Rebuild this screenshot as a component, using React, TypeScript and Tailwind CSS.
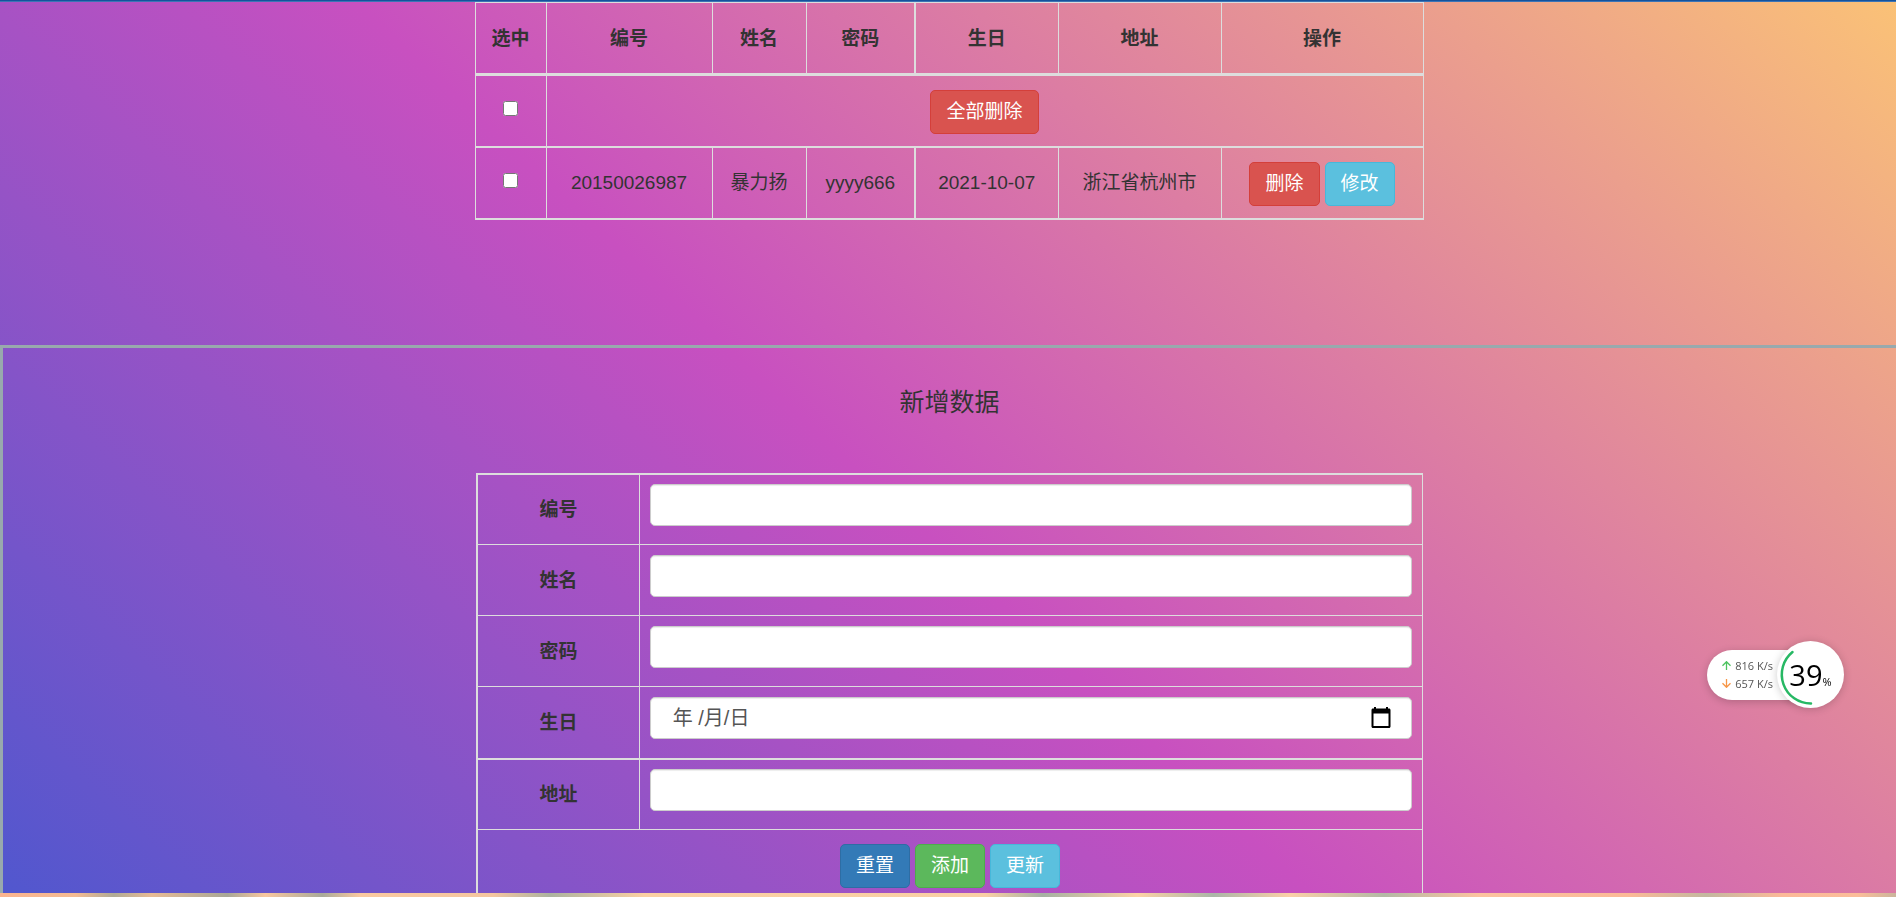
import { useState } from 'react';
import type { ReactNode } from 'react';
import clsx from 'clsx';

type Tone = 'danger' | 'info' | 'primary' | 'success';

const tones: Record<Tone, string> = {
  danger: 'bg-[#d9534f] border-[#d43f3a]',
  info: 'bg-[#5bc0de] border-[#46b8da]',
  primary: 'bg-[#337ab7] border-[#2e6da4]',
  success: 'bg-[#5cb85c] border-[#4cae4c]',
};

function Button({ tone, children }: { tone: Tone; children: ReactNode }) {
  return (
    <button
      type="button"
      className={clsx('h-11 rounded-[5px] border px-[15px] text-[19px] leading-6 text-white', tones[tone])}
    >
      {children}
    </button>
  );
}

const columns = [
  { label: '选中', width: 'w-[71px]' },
  { label: '编号', width: 'w-[166px]' },
  { label: '姓名', width: 'w-[94px]' },
  { label: '密码', width: 'w-[109px]' },
  { label: '生日', width: 'w-[143px]' },
  { label: '地址', width: 'w-[163px]' },
  { label: '操作', width: 'w-[202px]' },
];

const users = [
  { id: '20150026987', name: '暴力扬', password: 'yyyy666', birthday: '2021-10-07', address: '浙江省杭州市' },
];

const fields = [
  { id: 'no', label: '编号' },
  { id: 'name', label: '姓名' },
  { id: 'password', label: '密码' },
  { id: 'birthday', label: '生日' },
  { id: 'address', label: '地址' },
];

const cell = 'border border-[#ddd] p-0';
const control =
  'mb-2 flex h-[42px] w-full rounded-[5px] border border-[#ccc] bg-white text-[#555] shadow-[inset_0_1px_1px_rgba(0,0,0,0.075)]';

function UserTable() {
  return (
    <table className="mx-auto w-1/2 table-fixed border-collapse border border-[#ddd] text-center">
      <thead>
        <tr className="h-[72px]">
          {columns.map((c, i) => (
            <th key={c.label} className={clsx(cell, c.width, 'border-b-3 font-bold', i === 4 && 'border-l-2')}>
              {c.label}
            </th>
          ))}
        </tr>
      </thead>
      <tbody>
        <tr className="h-[72px]">
          <td className={clsx(cell, 'border-b-2')}>
            <input type="checkbox" aria-label="全选" className="mx-auto mb-1 block h-[15px] w-[15px]" />
          </td>
          <td colSpan={6} className={clsx(cell, 'border-b-2 pt-0.5')}>
            <Button tone="danger">全部删除</Button>
          </td>
        </tr>
        {users.map((u) => (
          <tr key={u.id} className="h-[72px]">
            <td className={clsx(cell, 'border-b-2')}>
              <input type="checkbox" aria-label={u.id} className="mx-auto mb-1 block h-[15px] w-[15px]" />
            </td>
            <td className={clsx(cell, 'border-b-2')}>{u.id}</td>
            <td className={clsx(cell, 'border-b-2')}>{u.name}</td>
            <td className={clsx(cell, 'border-b-2')}>{u.password}</td>
            <td className={clsx(cell, 'border-b-2 border-l-2')}>{u.birthday}</td>
            <td className={clsx(cell, 'border-b-2')}>{u.address}</td>
            <td className={clsx(cell, 'border-b-2 pt-0.5')}>
              <div className="flex justify-center gap-[5px]">
                <Button tone="danger">删除</Button>
                <Button tone="info">修改</Button>
              </div>
            </td>
          </tr>
        ))}
      </tbody>
    </table>
  );
}

function DateField({ id }: { id: string }) {
  const [value, setValue] = useState('');
  return (
    <div className={clsx(control, 'items-center pr-5 pl-[22px] text-[20px]')}>
      <input
        id={id}
        type="text"
        value={value}
        onChange={(e) => setValue(e.target.value)}
        placeholder="年 /月/日"
        className="min-w-0 flex-1 outline-none placeholder:text-[#555]"
      />
      <button type="button" aria-label="选择日期">
        <svg width="20" height="22" viewBox="0 0 20 22">
          <path
            fill="#000"
            fillRule="evenodd"
            d="M3 0h2v1.500h10V0h2v1.500h1c.9 0 1.500.6 1.500 1.500v16.500c0 .9-.6 1.500-1.500 1.500H2c-.9 0-1.500-.6-1.500-1.500V3c0-.9.6-1.500 1.500-1.500h1zM2.500 6.500V19h15V6.500z"
          />
        </svg>
      </button>
    </div>
  );
}

function UserForm() {
  return (
    <form className="mx-auto w-1/2">
      <table className="w-full border-collapse border-t-2 border-r border-l-2 border-[#ddd] text-center">
        <tbody>
          {fields.map((f) => (
            <tr key={f.id} className={clsx(f.id === 'birthday' ? 'h-[72px]' : 'h-[71px]')}>
              <th
                className={clsx(
                  'w-[162px] border-r border-[#ddd] p-0 font-bold',
                  f.id === 'birthday' ? 'border-b-2' : 'border-b',
                )}
              >
                <label htmlFor={f.id}>{f.label}</label>
              </th>
              <td className={clsx('border-[#ddd] px-2.5 py-0', f.id === 'birthday' ? 'border-b-2' : 'border-b')}>
                {f.id === 'birthday' ? (
                  <DateField id={f.id} />
                ) : (
                  <input id={f.id} type="text" className={clsx(control, 'px-4')} />
                )}
              </td>
            </tr>
          ))}
          <tr>
            <td colSpan={2} className="px-2.5 py-3.5">
              <div className="flex justify-center gap-[5px]">
                <Button tone="primary">重置</Button>
                <Button tone="success">添加</Button>
                <Button tone="info">更新</Button>
              </div>
            </td>
          </tr>
        </tbody>
      </table>
    </form>
  );
}

function NetMonitor() {
  return (
    <div className="fixed top-[641px] right-[52px] flex items-center font-['Open_Sans','Noto_Sans',sans-serif]">
      <div className="-mr-8 flex h-[50px] flex-col justify-center gap-0.5 rounded-l-full bg-white pr-9 pl-[15px] text-[11px] leading-4 text-[#555] shadow-[0_2px_8px_rgba(0,0,0,0.2)]">
        <div className="flex items-center gap-1">
          <svg width="9" height="9" viewBox="0 0 9 9" fill="none" stroke="#4cc35f" strokeWidth="1.300">
            <path d="M4.500 9V1M.5 4.700l4-4 4 4" />
          </svg>
          <span>816 K/s</span>
        </div>
        <div className="flex items-center gap-1">
          <svg width="9" height="9" viewBox="0 0 9 9" fill="none" stroke="#f79646" strokeWidth="1.300">
            <path d="M4.500 0v8M.5 4.300l4 4 4-4" />
          </svg>
          <span>657 K/s</span>
        </div>
      </div>
      <div className="relative flex h-[67px] w-[67px] items-center justify-center rounded-full bg-white text-black shadow-[0_1px_8px_rgba(0,0,0,0.2)]">
        <svg className="absolute inset-0" width="67" height="67" viewBox="0 0 67 67" fill="none">
          <path d="M15.500 11A29 29 0 0 0 34 62.500" stroke="#27b864" strokeWidth="2.500" strokeLinecap="round" />
        </svg>
        <div className="flex items-baseline">
          <span className="text-[29px] leading-8">39</span>
          <span className="text-[11px] leading-4">%</span>
        </div>
      </div>
    </div>
  );
}

export default function App() {
  return (
    <div className="flex h-screen flex-col overflow-hidden font-['Liberation_Sans','Noto_Sans_CJK_SC',sans-serif] text-[19px] leading-[27px] text-[#333]">
      <div className="h-0.5 shrink-0 border-b border-[#3c74b4] bg-[#14529c]" />
      <main className="min-h-0 flex-1 overflow-hidden bg-[linear-gradient(43deg,#4158d0_-6%,#c850c0_46%,#ffcc70_105%)]">
        <section className="pb-[125px] pl-0.5">
          <UserTable />
        </section>
        <section className="border-t-3 border-l-3 border-[#98a9ad]">
          <h2 className="pt-9 pb-[53px] text-center text-[25px] leading-9">新增数据</h2>
          <UserForm />
        </section>
      </main>
      <div className="h-1 shrink-0 bg-[linear-gradient(90deg,#fbb48f_0%,#f4bb93_4%,#b0ab96_6%,#e8bb95_8%,#a8a797_12%,#f9c79f_14%,#a9aa9a_17%,#fac9a0_19%,#f5c6a0_26%,#acb3a0_29%,#fbd0a3_34%,#f9cfa5_52%,#a5b1a3_55%,#fdd3a6_60%,#aab6a8_64%,#fbd0a8_68%,#b3b9a6_73%,#fcc3a0_78%,#fbb997_86%,#c3b8a0_90%,#fcb999_94%,#fbbd9a_98%,#cbb59c_100%)]" />
      <NetMonitor />
    </div>
  );
}
